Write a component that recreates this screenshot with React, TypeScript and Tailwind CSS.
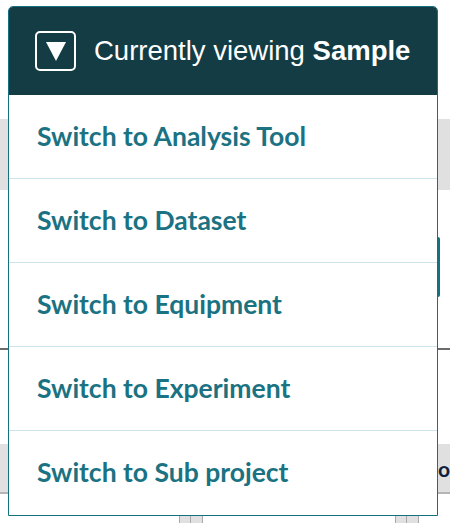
import { ReactNode } from "react";

const options = [
  "Switch to Analysis Tool",
  "Switch to Dataset",
  "Switch to Equipment",
  "Switch to Experiment",
  "Switch to Sub project",
];

// page content sitting underneath the open dropdown
const Backdrop = () => {
  return (
    <div className="flex flex-col">
      <div className="h-[119px]" />
      <div className="h-[71px] bg-[#e0e0e0]" />
      <div className="h-[47px]" />
      <div className="flex h-[60px]">
        <div className="ml-[436px] w-[4px] rounded-[2px] bg-[#17707f]" />
      </div>
      <div className="h-[51px]" />
      <div className="h-[2px] bg-[#6b6b6b]" />
      <div className="h-[94px]" />
      <div className="flex h-[50px] items-center justify-end border-b-2 border-[#b5b5b5] bg-[#e0e0e0]">
        <span
          className="text-[21px] font-bold leading-none text-[#0f1f3a]"
          style={{ fontFamily: "'Source Sans Pro', Lato, sans-serif" }}
        >
          o
        </span>
      </div>
      <div className="h-[20px]" />
      <div className="flex h-[10px]">
        <div className="ml-[179px] flex w-[24px] border-x border-t border-[#aaaaaa] bg-[#e0e0e0]">
          <div className="w-[11px] border-r border-[#aaaaaa]" />
        </div>
        <div className="ml-[192px] flex w-[24px] border-x border-t border-[#aaaaaa] bg-[#e0e0e0]">
          <div className="w-[11px] border-r border-[#aaaaaa]" />
        </div>
      </div>
    </div>
  );
};

const Option = ({ children, last }: { children: ReactNode; last?: boolean }) => {
  return (
    <div
      className={
        "flex h-[84px] items-center pl-[28px] text-[26.5px] font-bold text-[#1a7282] " +
        (last ? "" : "border-b border-[#cde5ea]")
      }
    >
      {children}
    </div>
  );
};

export default function App() {
  return (
    <div className="relative h-[523px] w-[450px] overflow-hidden bg-white">
      <Backdrop />

      <div className="absolute left-[8px] top-[6px] w-[430px] overflow-hidden rounded-t-[5px] border border-[#17707f] bg-white">
        <div
          className="flex h-[88px] items-center gap-[18px] bg-[#143c44] pl-[26px] text-[27.5px] text-white"
          style={{ fontFamily: "'Liberation Sans', Arial, sans-serif" }}
        >
          <div className="flex h-[40px] w-[41px] items-center justify-center rounded-[5px] border-2 border-white">
            <svg width="20" height="19" viewBox="0 0 20 19">
              <polygon points="0,0 20,0 10,19" fill="white" />
            </svg>
          </div>
          <span>
            Currently viewing <b>Sample</b>
          </span>
        </div>
        <div style={{ fontFamily: "'Source Sans Pro', Lato, sans-serif" }}>
          {options.map((o, i) => (
            <Option key={o} last={i === options.length - 1}>
              {o}
            </Option>
          ))}
        </div>
      </div>
    </div>
  );
}
